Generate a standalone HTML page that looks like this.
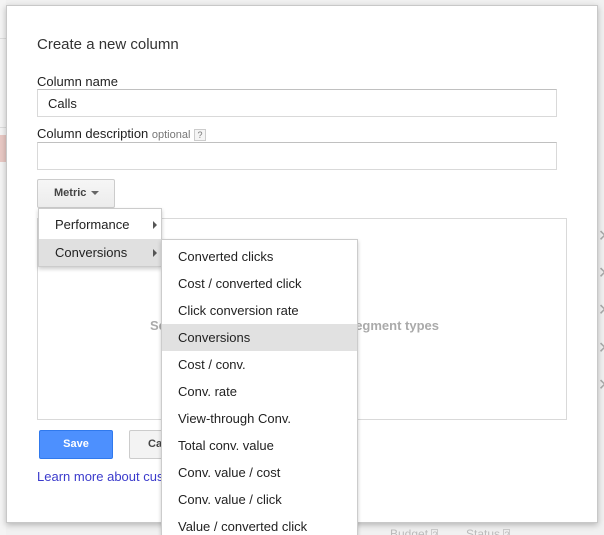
<!DOCTYPE html>
<html><head><style>
*{box-sizing:border-box;margin:0;padding:0}
html,body{width:604px;height:535px;overflow:hidden}
body{background:#f1f1f1;font-family:"Liberation Sans",Arial,sans-serif;position:relative;color:#222}
.abs{position:absolute}
.dlg{left:6px;top:5px;width:592px;height:518px;background:#fff;border:1px solid #c8c8c8;box-shadow:0 2px 6px rgba(0,0,0,.25)}
.lbl{font-size:13px;color:#222}
.inp{border:1px solid #d9d9d9;border-top-color:#c0c0c0;background:#fff;height:28px;font-size:13px;padding:6px 10px}
.menu{background:#fff;border:1px solid #ccc;box-shadow:0 2px 4px rgba(0,0,0,.2);font-size:13px}
.row{height:27px;line-height:27px;padding-left:16px;position:relative}
.arr{position:absolute;right:4px;top:10px;width:0;height:0;border-left:4px solid #555;border-top:4px solid transparent;border-bottom:4px solid transparent}
.x{right:-2px;width:8px;font-size:16px;color:#aaa}
</style></head><body>
<div class="abs" style="left:0;top:0;width:6px;height:535px;background:#f4f4f4"></div>
<div class="abs" style="left:0;top:135px;width:6px;height:27px;background:#e9c9c4"></div>
<div class="abs" style="left:0;top:38px;width:6px;height:1px;background:#ddd"></div>
<div class="abs" style="left:0;top:127px;width:6px;height:1px;background:#ddd"></div>
<div class="abs x" style="top:226px">✕</div>
<div class="abs x" style="top:263px">✕</div>
<div class="abs x" style="top:300px">✕</div>
<div class="abs x" style="top:338px">✕</div>
<div class="abs x" style="top:375px">✕</div>
<div class="abs" style="left:390px;top:527px;font-size:12px;color:#bbb">Budget <span style="border:1px solid #ccc;font-size:9px">?</span></div>
<div class="abs" style="left:466px;top:527px;font-size:12px;color:#bbb">Status <span style="border:1px solid #ccc;font-size:9px">?</span></div>
<div class="abs dlg"></div>
<div class="abs" style="left:37px;top:36px;font-size:15px;color:#333">Create a new column</div>
<div class="abs lbl" style="left:37px;top:74px">Column name</div>
<div class="abs inp" style="left:37px;top:89px;width:520px">Calls</div>
<div class="abs lbl" style="left:37px;top:126px">Column description <span style="font-size:11px;color:#777">optional</span> <span style="display:inline-block;border:1px solid #ccc;font-size:9px;color:#777;width:12px;height:12px;text-align:center;line-height:11px;background:#f5f5f5">?</span></div>
<div class="abs inp" style="left:37px;top:142px;width:520px"></div>
<div class="abs" style="left:37px;top:179px;width:78px;height:29px;border:1px solid #ccc;border-radius:2px;background:linear-gradient(#f6f6f6,#ececec);font-size:11px;font-weight:bold;color:#444;line-height:27px;padding-left:16px">Metric <span style="display:inline-block;border-top:4px solid #666;border-left:4px solid transparent;border-right:4px solid transparent;vertical-align:middle;margin-left:2px"></span></div>
<div class="abs" style="left:37px;top:218px;width:530px;height:202px;border:1px solid #d9d9d9"></div>
<div class="abs" style="left:150px;top:318px;font-size:13px;font-weight:bold;color:#aaa;white-space:nowrap">Select metrics, dimensions and segment types</div>
<div class="abs" style="left:39px;top:430px;width:74px;height:29px;background:#4d90fe;border:1px solid #3079ed;border-radius:2px;color:#fff;font-size:11px;font-weight:bold;text-align:center;line-height:27px">Save</div>
<div class="abs" style="left:129px;top:430px;width:74px;height:29px;background:#f3f3f3;border:1px solid #ccc;border-radius:2px;color:#444;font-size:11px;font-weight:bold;line-height:27px;padding-left:18px">Cancel</div>
<div class="abs" style="left:37px;top:469px;font-size:13px;color:#3b3bcc;white-space:nowrap">Learn more about custom columns</div>
<div class="abs menu" style="left:38px;top:208px;width:124px;height:59px">
<div class="row" style="height:30px;line-height:32px">Performance<span class="arr" style="top:12px"></span></div>
<div class="row" style="background:#e0e0e0">Conversions<span class="arr"></span></div>
</div>
<div class="abs menu" style="left:161px;top:239px;width:197px;height:296px;padding-top:3px;overflow:hidden;border-bottom:none">
<div class="row">Converted clicks</div>
<div class="row">Cost / converted click</div>
<div class="row">Click conversion rate</div>
<div class="row" style="background:#e1e1e1">Conversions</div>
<div class="row">Cost / conv.</div>
<div class="row">Conv. rate</div>
<div class="row">View-through Conv.</div>
<div class="row">Total conv. value</div>
<div class="row">Conv. value / cost</div>
<div class="row">Conv. value / click</div>
<div class="row">Value / converted click</div>
</div>
</body></html>
